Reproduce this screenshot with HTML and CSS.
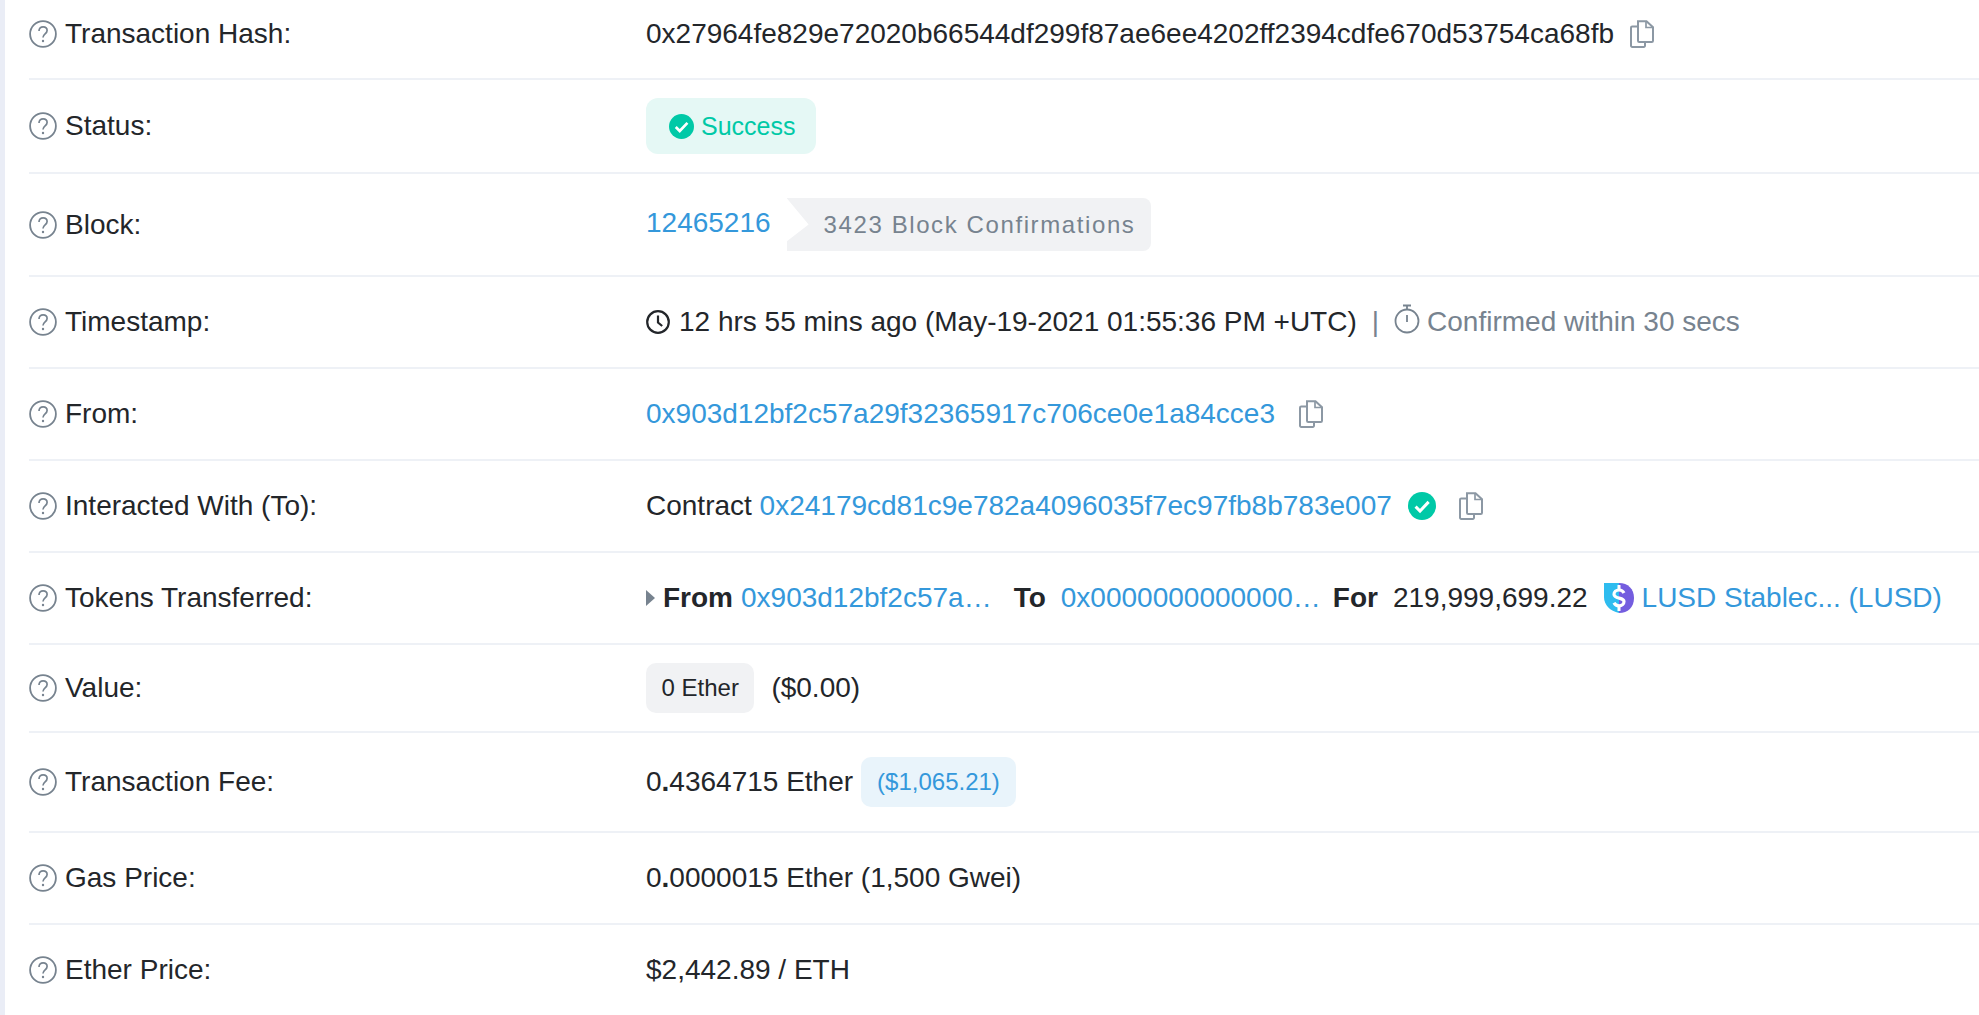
FILE: index.html
```html
<!DOCTYPE html>
<html lang="en">
<head>
    <meta charset="UTF-8">
    <meta name="viewport" content="width=device-width, initial-scale=1.0">
    <title>Transaction Details</title>
    <link rel="stylesheet" href="styles.css">
</head>
<body>
    <svg class="sprites" width="0" height="0">
        <symbol id="i-help" viewBox="0 0 28 28">
            <circle cx="14" cy="14" r="12.900" fill="none" stroke="currentColor" stroke-width="1.800"/>
            <path d="M10 11c0-2.600 1.800-4.200 4.100-4.200s4 1.500 4 3.700c0 3.400-4.100 3.400-4.100 7" fill="none" stroke="currentColor" stroke-width="1.700"/>
            <circle cx="14" cy="21" r="1.200" fill="currentColor"/>
        </symbol>
        <symbol id="i-copy" viewBox="0 0 24 28">
            <path d="M8 1.200h8.500l6.500 6v13.600a1.200 1.200 0 0 1-1.200 1.200H9.200A1.200 1.200 0 0 1 8 20.800z" fill="none" stroke="currentColor" stroke-width="2"/>
            <path d="M16 1.500v6h6.500" fill="none" stroke="currentColor" stroke-width="1.700"/>
            <path d="M8 6.500H2.200A1.200 1.200 0 0 0 1 7.700v18a1.200 1.200 0 0 0 1.200 1.200h11.600a1.200 1.200 0 0 0 1.200-1.200V22" fill="none" stroke="currentColor" stroke-width="2"/>
        </symbol>
        <symbol id="i-check" viewBox="0 0 24 24">
            <circle cx="12" cy="12" r="12" fill="currentColor"/>
            <path d="M6.500 12.500l3.800 3.800 7.400-7.800" fill="none" stroke="#fff" stroke-width="2.600"/>
        </symbol>
    </svg>

    <div class="details">
        <div class="row row-hash">
            <div class="label"><svg class="help"><use href="#i-help"/></svg>Transaction Hash:</div>
            <div class="value">
                <span>0x27964fe829e72020b66544df299f87ae6ee4202ff2394cdfe670d53754ca68fb</span>
                <svg class="copy copy-hash"><use href="#i-copy"/></svg>
            </div>
        </div>

        <div class="row row-status">
            <div class="label"><svg class="help"><use href="#i-help"/></svg>Status:</div>
            <div class="value">
                <span class="pill-success"><svg class="check"><use href="#i-check"/></svg>Success</span>
            </div>
        </div>

        <div class="row row-block">
            <div class="label"><svg class="help"><use href="#i-help"/></svg>Block:</div>
            <div class="value">
                <a class="block-no" href="#">12465216</a>
                <span class="pill-confirm">3423 Block Confirmations</span>
            </div>
        </div>

        <div class="row">
            <div class="label"><svg class="help"><use href="#i-help"/></svg>Timestamp:</div>
            <div class="value">
                <svg class="clock" viewBox="0 0 24 24">
                    <circle cx="12" cy="12" r="10.800" fill="none" stroke="currentColor" stroke-width="2.200"/>
                    <path d="M12 5.500V12.500l4.200 3.500" fill="none" stroke="currentColor" stroke-width="2.200"/>
                </svg>
                <span class="stamp">12 hrs 55 mins ago (May-19-2021 01:55:36 PM +UTC)</span>
                <span class="divider">|</span>
                <span class="muted">
                    <svg class="timer" viewBox="0 0 26 30">
                        <circle cx="13" cy="17" r="11.500" fill="none" stroke="currentColor" stroke-width="1.800"/>
                        <path d="M9 1.500h8M13 1.500v4M13 11v7" fill="none" stroke="currentColor" stroke-width="1.800"/>
                    </svg>
                    Confirmed within 30 secs
                </span>
            </div>
        </div>

        <div class="row">
            <div class="label"><svg class="help"><use href="#i-help"/></svg>From:</div>
            <div class="value">
                <a href="#">0x903d12bf2c57a29f32365917c706ce0e1a84cce3</a>
                <svg class="copy copy-from"><use href="#i-copy"/></svg>
            </div>
        </div>

        <div class="row">
            <div class="label"><svg class="help"><use href="#i-help"/></svg>Interacted With (To):</div>
            <div class="value">
                <span>Contract&nbsp;</span><a href="#">0x24179cd81c9e782a4096035f7ec97fb8b783e007</a>
                <svg class="check check-contract"><use href="#i-check"/></svg>
                <svg class="copy copy-contract"><use href="#i-copy"/></svg>
            </div>
        </div>

        <div class="row">
            <div class="label"><svg class="help"><use href="#i-help"/></svg>Tokens Transferred:</div>
            <div class="value tokens">
                <span class="caret"></span>
                <b class="tok-from">From</b>
                <a class="addr addr-from" href="#">0x903d12bf2c57a…</a>
                <b class="tok-to">To</b>
                <a class="addr addr-to" href="#">0x0000000000000…</a>
                <b class="tok-for">For</b>
                <span class="amount">219,999,699.22</span>
                <svg class="token-logo" viewBox="0 0 30 30">
                    <path d="M0 0h15v30C6 28 0 22 0 14z" fill="#2ebcef"/>
                    <path d="M15 0c9 0 15 6 15 15s-6 15-15 15z" fill="#745ddf"/>
                    <path d="M20 10c-1-2-3-3-5-3-3 0-5 1.800-5 4.200 0 5.300 10 2.600 10 7.400 0 2.500-2 4.200-5 4.200-2 0-4-1-5-3" fill="none" stroke="#fff" stroke-width="3.200"/>
                    <path d="M15 2v4M15 24v4" stroke="#fff" stroke-width="3"/>
                </svg>
                <a href="#">LUSD Stablec... (LUSD)</a>
            </div>
        </div>

        <div class="row row-amount">
            <div class="label"><svg class="help"><use href="#i-help"/></svg>Value:</div>
            <div class="value">
                <span class="pill-gray">0 Ether</span>
                <span class="usd">($0.00)</span>
            </div>
        </div>

        <div class="row row-fee">
            <div class="label"><svg class="help"><use href="#i-help"/></svg>Transaction Fee:</div>
            <div class="value">
                <span>0<b>.</b>4364715 Ether</span>
                <span class="pill-blue">($1,065.21)</span>
            </div>
        </div>

        <div class="row">
            <div class="label"><svg class="help"><use href="#i-help"/></svg>Gas Price:</div>
            <div class="value"><span>0<b>.</b>0000015 Ether (1,500 Gwei)</span></div>
        </div>

        <div class="row row-last">
            <div class="label"><svg class="help"><use href="#i-help"/></svg>Ether Price:</div>
            <div class="value"><span>$2,442.89 / ETH</span></div>
        </div>
    </div>
</body>
</html>
```

FILE: styles.css
```css
html, body {
    height: 100%;
}

body {
    margin: 0;
    background-color: #fff;
    color: #23262a;
    font-family: "Liberation Sans", Arial, sans-serif;
    font-size: 28px;
    overflow: hidden;
}

a {
    color: #3498db;
    text-decoration: none;
}

.sprites {
    display: block;
    height: 0;
}

.details {
    height: 100%;
    border-left: 5px solid #eaedf6;
    padding-left: 24px;
}

.row {
    display: grid;
    grid-template-columns: 617px 1fr;
    align-items: center;
    height: 90px;
    border-bottom: 2px solid #eef1f6;
}

.row-hash {
    height: 80px;
    padding-bottom: 11px;
    box-sizing: border-box;
}

.row-status {
    height: 92px;
}

.row-block {
    height: 101px;
}

.row-amount {
    height: 86px;
}

.row-fee {
    height: 98px;
}

.row-last {
    border-bottom: none;
}

.label {
    display: flex;
    align-items: center;
}

.help {
    width: 28px;
    height: 28px;
    margin-right: 8px;
    color: #77838f;
}

.value {
    display: flex;
    align-items: center;
    white-space: nowrap;
}

.copy {
    width: 24px;
    height: 28px;
    color: #8c98a4;
}

.copy-hash {
    margin-left: 16px;
}

.copy-from {
    margin-left: 24px;
}

.copy-contract {
    margin-left: 23px;
}

.check {
    width: 25px;
    height: 25px;
    margin-right: 7px;
    color: #00c9a7;
}

.check-contract {
    width: 28px;
    height: 28px;
    margin: 0 0 0 16px;
}

.pill-success {
    display: flex;
    align-items: center;
    height: 56px;
    padding: 0 21px 0 23px;
    border-radius: 12px;
    background-color: #e5f8f5;
    color: #00c9a7;
    font-size: 25px;
}

.block-no {
    position: relative;
    top: -2px;
    margin-right: 16px;
}

.pill-confirm {
    display: flex;
    align-items: center;
    height: 53px;
    padding: 0 16px 0 37px;
    border-radius: 0 8px 8px 0;
    background-color: #f1f2f4;
    color: #77838f;
    font-size: 24px;
    letter-spacing: 1.600px;
    clip-path: polygon(0 0, 100% 0, 100% 100%, 0 100%, 0 82%, 22px 50%, 0 0);
}

.clock {
    width: 24px;
    height: 24px;
    margin-right: 9px;
}

.divider {
    margin: 0 15px 0 15px;
    color: #77838f;
}

.muted {
    display: flex;
    align-items: center;
    color: #77838f;
}

.timer {
    width: 26px;
    height: 30px;
    margin: -6px 7px 0 0;
}

.caret {
    width: 0;
    height: 0;
    margin-right: 8px;
    border-top: 8px solid transparent;
    border-bottom: 8px solid transparent;
    border-left: 9px solid #77838f;
}

.tokens b {
    font-weight: 700;
}

.addr-from {
    margin: 0 22px 0 8px;
}

.addr-to {
    margin: 0 12px 0 15px;
}

.amount {
    margin: 0 16px 0 15px;
}

.token-logo {
    width: 30px;
    height: 30px;
    margin-right: 8px;
}

.pill-gray {
    display: flex;
    align-items: center;
    height: 50px;
    padding: 0 15.500px;
    border-radius: 10px;
    background-color: #f1f2f4;
    font-size: 24px;
}

.usd {
    margin-left: 17px;
}

.pill-blue {
    display: flex;
    align-items: center;
    height: 50px;
    margin-left: 8px;
    padding: 0 16px;
    border-radius: 10px;
    background-color: #e9f4fb;
    color: #3498db;
    font-size: 24px;
}
```
